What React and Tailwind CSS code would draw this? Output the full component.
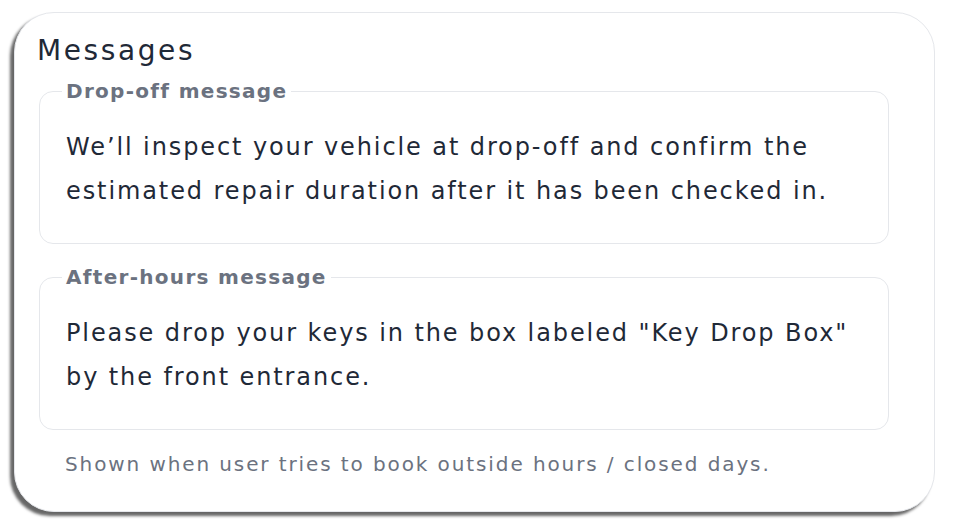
import React from 'react';

const font = { fontFamily: '"DejaVu Sans", "Liberation Sans", sans-serif' };

const MessageField = ({ label, children }) => (
  <fieldset className="border border-gray-200 rounded-[14px] pl-[22px] pr-4 pt-[21px] pb-[30px]">
    <legend className="px-1 text-[20px] leading-[26px] font-bold tracking-[1.3px] text-[#6b7280]">{label}</legend>
    <p className="pl-1 text-[24px] leading-[44px] tracking-[1.9px] text-[#1f2937]">{children}</p>
  </fieldset>
);

export default function App() {
  return (
    <div className="w-[954px] h-[530px] bg-white pl-[14px] pr-[19px] pt-[12px]" style={font}>
      <div className="h-[500px] bg-white rounded-[40px] border border-gray-200 shadow-[-4px_4px_3px_rgba(0,0,0,0.6)] pl-6 pr-[45px] pt-[20px] flex flex-col">
        <h2 className="-ml-0.5 text-[28px] leading-[36px] tracking-[2.6px] text-[#1f2937] mb-[9px]">Messages</h2>
        <div className="flex flex-col gap-5">
          <MessageField label="Drop-off message">
            We’ll inspect your vehicle at drop-off and confirm the estimated repair duration after it has been checked in.
          </MessageField>
          <MessageField label="After-hours message">
            Please drop your keys in the box labeled "Key Drop Box" by the front entrance.
          </MessageField>
          <p className="pl-[26px] text-[20px] leading-[28px] tracking-[1.9px] font-normal text-[#6b7280]">
            Shown when user tries to book outside hours / closed days.
          </p>
        </div>
      </div>
    </div>
  );
}
